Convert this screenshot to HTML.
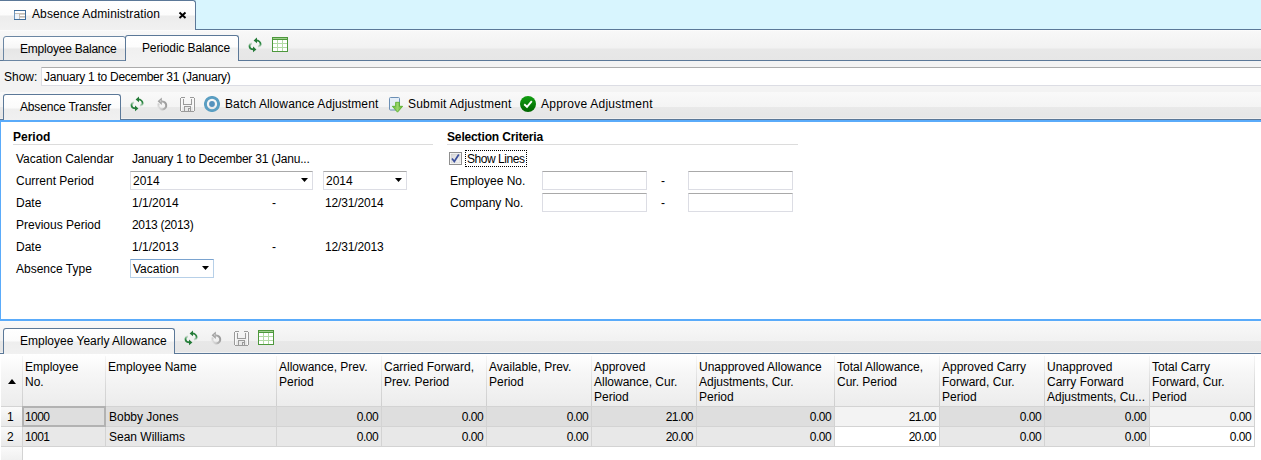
<!DOCTYPE html>
<html><head><meta charset="utf-8">
<style>
*{box-sizing:border-box}
html,body{margin:0;padding:0}
body{width:1261px;height:460px;overflow:hidden;position:relative;background:#f3f3f3;font-family:"Liberation Sans",sans-serif;font-size:12px;color:#000}
.a{position:absolute}
.t{position:absolute;line-height:14px;white-space:nowrap}
.hl{position:absolute;left:0;right:0;height:1px}
</style></head><body>

<!-- top strip -->
<div class="a" style="left:0;top:0;width:1261px;height:29px;background:#d8f5fe"></div>
<div class="a" style="left:-4px;top:0;width:200px;height:31px;border:1px solid #5b7898;border-bottom:none;border-radius:0 3px 0 0;background:linear-gradient(#fff 0,#fcfcfc 14px,#ececec 15px,#f1f1f1 29px)"></div>
<div class="hl" style="top:29px;left:195px;background:#5b7898"></div>
<svg class="a" style="left:14px;top:10px" width="12" height="10" shape-rendering="crispEdges"><rect x="0" y="0" width="12" height="10" fill="#3f6d9b"/><rect x="0" y="1" width="1" height="8" fill="#6f97bd"/><rect x="1" y="1" width="10" height="8" fill="#fff"/><rect x="1" y="3" width="10" height="1" fill="#c4bdb5"/><rect x="1" y="4" width="4" height="5" fill="#edf3fa"/><rect x="5" y="4" width="1" height="5" fill="#c4bdb5"/><rect x="6" y="4" width="5" height="1" fill="#d8d3cc"/><rect x="6" y="6" width="5" height="1" fill="#c4bdb5"/><rect x="6" y="7" width="5" height="1" fill="#d8d3cc"/></svg>
<div class="t" style="left:32px;top:7px;letter-spacing:0.12px">Absence Administration</div>
<svg class="a" style="left:178px;top:11px" width="9" height="8"><path d="M1.5 1.5L7.5 7M7.5 1.5L1.5 7" stroke="#000" stroke-width="1.9"/></svg>

<!-- toolbar 1 -->
<div class="a" style="left:0;top:30px;width:1261px;height:30px;background:linear-gradient(#fff 0,#f8f8f8 1px,#f2f2f2 18px,#e8e8e8 19px,#e6e6e6 30px)"></div>
<div class="hl" style="top:60px;background:#5b7898"></div>
<div class="a" style="left:3px;top:36px;width:123px;height:25px;border:1px solid #6b86a3;border-radius:3px 3px 0 0;background:linear-gradient(#fff 0,#f6f6f6 11px,#e6e6e6 12px,#ebebeb 24px)"></div>
<div class="t" style="left:20px;top:42px;letter-spacing:-0.22px">Employee Balance</div>
<div class="a" style="left:125px;top:35px;width:114px;height:26px;border:1px solid #5b7898;border-bottom:none;border-radius:3px 3px 0 0;background:linear-gradient(#fff 0,#fdfdfd 11px,#f0f0f0 12px,#f3f3f3 26px)"></div>
<div class="t" style="left:142px;top:41px;letter-spacing:-0.13px">Periodic Balance</div>



<!-- show row -->
<div class="t" style="left:4px;top:70px">Show:</div>
<div class="a" style="left:41px;top:67px;width:1230px;height:19px;background:#fff;border:1px solid #dcdde4;border-top-color:#acacac"></div>
<div class="t" style="left:44px;top:70px;letter-spacing:-0.26px">January 1 to December 31 (January)</div>

<!-- toolbar 2 -->
<div class="a" style="left:0;top:92px;width:1261px;height:28px;background:linear-gradient(#f9f9f9 0,#f4f4f4 15px,#e9e9e9 15px,#e6e6e6 26px,#f0f0f0 26px,#f0f0f0 27px,#5b7898 27px)"></div>
<div class="a" style="left:3px;top:94px;width:118px;height:26px;border:1px solid #5b7898;border-bottom:none;border-radius:3px 3px 0 0;background:linear-gradient(#fff 0,#fbfbfb 13px,#eeeeee 14px,#f1f1f1 26px)"></div>
<div class="t" style="left:20px;top:100px;letter-spacing:-0.18px">Absence Transfer</div>



<svg class="a" style="left:204px;top:96px" width="16" height="16"><circle cx="8" cy="8" r="6.6" fill="none" stroke="#5a9ec2" stroke-width="2.9"/><circle cx="8" cy="8" r="2.9" fill="#5692bd"/></svg>
<div class="t" style="left:225px;top:97px;letter-spacing:0.1px">Batch Allowance Adjustment</div>
<svg class="a" style="left:389px;top:97px" width="15" height="16"><rect x="0.5" y="0.5" width="10" height="12.5" rx="1" fill="#e4eef8" stroke="#6b8fb5"/><defs><linearGradient id="sg" x1="0" y1="0" x2="1" y2="0"><stop offset="0" stop-color="#5cb82a"/><stop offset="0.5" stop-color="#9ad46e"/><stop offset="1" stop-color="#5cb82a"/></linearGradient></defs><path d="M6.6 5.3h3.8v4h3.3l-5.2 5.9l-5.2-5.9h3.3z" fill="url(#sg)" stroke="#55ad28" stroke-width="0.8"/></svg>
<div class="t" style="left:408px;top:97px;letter-spacing:0.2px">Submit Adjustment</div>
<svg class="a" style="left:520px;top:96px" width="16" height="16"><defs><linearGradient id="gg" x1="0" y1="0" x2="0" y2="1"><stop offset="0" stop-color="#12a012"/><stop offset="1" stop-color="#006400"/></linearGradient></defs><circle cx="8" cy="8" r="8" fill="url(#gg)"/><path d="M4.2 8.3 L7 10.8 L11.8 5.2" fill="none" stroke="#fff" stroke-width="1.9"/></svg>
<div class="t" style="left:541px;top:97px;letter-spacing:0.24px">Approve Adjustment</div>

<!-- content panel -->
<div class="a" style="left:0;top:120px;width:1261px;height:201px;background:#fff;border-left:1px solid #5aabfa;border-top:2px solid #5aabfa;border-bottom:2px solid #5aabfa"></div>

<div class="t" style="left:13px;top:130px;font-weight:bold">Period</div>
<div class="a" style="left:13px;top:144px;width:420px;height:1px;background:#dcdcdc"></div>
<div class="t" style="left:16px;top:152px">Vacation Calendar</div>
<div class="t" style="left:132px;top:152px;letter-spacing:-0.22px">January 1 to December 31 (Janu...</div>
<div class="t" style="left:16px;top:174px">Current Period</div>
<div class="a" style="left:130px;top:171px;width:183px;height:19px;border:1px solid #dcdde4;border-top-color:#a9a9a9;background:#fff"></div>
<div class="t" style="left:133px;top:174px">2014</div>
<svg class="a" style="left:301px;top:178px" width="7" height="4"><path d="M0 0h7L3.5 4z" fill="#000"/></svg>
<div class="a" style="left:323px;top:171px;width:84px;height:19px;border:1px solid #dcdde4;border-top-color:#a9a9a9;background:#fff"></div>
<div class="t" style="left:326px;top:174px">2014</div>
<svg class="a" style="left:395px;top:178px" width="7" height="4"><path d="M0 0h7L3.5 4z" fill="#000"/></svg>
<div class="t" style="left:16px;top:196px">Date</div>
<div class="t" style="left:132px;top:196px">1/1/2014</div>
<div class="t" style="left:272px;top:196px">-</div>
<div class="t" style="left:325px;top:196px;letter-spacing:-0.15px">12/31/2014</div>
<div class="t" style="left:16px;top:218px">Previous Period</div>
<div class="t" style="left:132px;top:218px;letter-spacing:-0.3px">2013 (2013)</div>
<div class="t" style="left:16px;top:240px">Date</div>
<div class="t" style="left:132px;top:240px">1/1/2013</div>
<div class="t" style="left:272px;top:240px">-</div>
<div class="t" style="left:325px;top:240px;letter-spacing:-0.15px">12/31/2013</div>
<div class="t" style="left:16px;top:262px">Absence Type</div>
<div class="a" style="left:130px;top:259px;width:84px;height:19px;border:1px solid #b7d0e8;border-top-color:#7aa3cf;background:#fff"></div>
<div class="t" style="left:133px;top:262px">Vacation</div>
<svg class="a" style="left:202px;top:266px" width="7" height="4"><path d="M0 0h7L3.5 4z" fill="#000"/></svg>

<div class="t" style="left:447px;top:130px;font-weight:bold;letter-spacing:-0.15px">Selection Criteria</div>
<div class="a" style="left:447px;top:144px;width:351px;height:1px;background:#dcdcdc"></div>
<svg class="a" style="left:449px;top:152px" width="13" height="13"><defs><linearGradient id="cb" x1="0" y1="0" x2="1" y2="1"><stop offset="0" stop-color="#d6d6d6"/><stop offset="1" stop-color="#f6f6f6"/></linearGradient></defs><rect x="0.5" y="0.5" width="12" height="12" fill="#fff" stroke="#8f8f8f"/><rect x="2" y="2" width="9" height="9" fill="url(#cb)" stroke="#c4c4c4" stroke-width="0.5"/><path d="M3 6.5 L5.3 9.5 L9.8 2.5" fill="none" stroke="#3b4f9c" stroke-width="1.7"/></svg>
<div class="a" style="left:465px;top:150px;width:62px;height:17px;border:1px dotted #000"></div>
<div class="t" style="left:467px;top:152px;letter-spacing:-0.45px">Show Lines</div>
<div class="t" style="left:450px;top:174px">Employee No.</div>
<div class="a" style="left:542px;top:171px;width:105px;height:19px;border:1px solid #dcdde4;border-top-color:#a9a9a9;background:#fff"></div>
<div class="t" style="left:661px;top:174px">-</div>
<div class="a" style="left:688px;top:171px;width:105px;height:19px;border:1px solid #dcdde4;border-top-color:#a9a9a9;background:#fff"></div>
<div class="t" style="left:450px;top:196px">Company No.</div>
<div class="a" style="left:542px;top:193px;width:105px;height:19px;border:1px solid #dcdde4;border-top-color:#a9a9a9;background:#fff"></div>
<div class="t" style="left:661px;top:196px">-</div>
<div class="a" style="left:688px;top:193px;width:105px;height:19px;border:1px solid #dcdde4;border-top-color:#a9a9a9;background:#fff"></div>

<!-- toolbar 3 -->
<div class="a" style="left:0;top:321px;width:1261px;height:33px;background:linear-gradient(#fafafa 0,#f8f8f8 2px,#f1f1f1 20px,#e8e8e8 20px,#e6e6e6 31px,#f2f2f2 31px,#f2f2f2 32px,#5b7898 32px)"></div>
<div class="a" style="left:3px;top:328px;width:172px;height:26px;border:1px solid #5b7898;border-bottom:none;border-radius:3px 3px 0 0;background:linear-gradient(#fff 0,#fbfbfb 12px,#eeeeee 13px,#f1f1f1 26px)"></div>
<div class="t" style="left:20px;top:334px">Employee Yearly Allowance</div>





<!-- grid -->
<div class="a" style="left:0;top:354px;width:1261px;height:106px;background:#fff"></div>
<div id="grid">
<div class="a" style="left:1px;top:354px;width:1253px;height:52px;background:linear-gradient(#fff 0,#fcfcfc 8px,#f6f6f6 20px,#ececec 52px)"></div>
<div class="a" style="left:1px;top:407px;width:21px;height:19px;background:linear-gradient(#fafafa,#e9e9e9)"></div>
<div class="a" style="left:1px;top:427px;width:21px;height:19px;background:linear-gradient(#fafafa,#e9e9e9)"></div>
<div class="a" style="left:1px;top:447px;width:21px;height:13px;background:linear-gradient(#fafafa,#f0f0f0)"></div>
<div class="a" style="left:23px;top:407px;width:82px;height:19px;background:#dedede"></div>
<div class="a" style="left:106px;top:407px;width:170px;height:19px;background:#dedede"></div>
<div class="a" style="left:277px;top:407px;width:104px;height:19px;background:#dedede"></div>
<div class="a" style="left:382px;top:407px;width:104px;height:19px;background:#dedede"></div>
<div class="a" style="left:487px;top:407px;width:104px;height:19px;background:#dedede"></div>
<div class="a" style="left:592px;top:407px;width:104px;height:19px;background:#dedede"></div>
<div class="a" style="left:697px;top:407px;width:137px;height:19px;background:#dedede"></div>
<div class="a" style="left:835px;top:407px;width:104px;height:19px;background:#f3f3f3"></div>
<div class="a" style="left:940px;top:407px;width:104px;height:19px;background:#dedede"></div>
<div class="a" style="left:1045px;top:407px;width:104px;height:19px;background:#dedede"></div>
<div class="a" style="left:1150px;top:407px;width:104px;height:19px;background:#f3f3f3"></div>
<div class="a" style="left:23px;top:427px;width:82px;height:19px;background:#e8e8e8"></div>
<div class="a" style="left:106px;top:427px;width:170px;height:19px;background:#e8e8e8"></div>
<div class="a" style="left:277px;top:427px;width:104px;height:19px;background:#e8e8e8"></div>
<div class="a" style="left:382px;top:427px;width:104px;height:19px;background:#e8e8e8"></div>
<div class="a" style="left:487px;top:427px;width:104px;height:19px;background:#e8e8e8"></div>
<div class="a" style="left:592px;top:427px;width:104px;height:19px;background:#e8e8e8"></div>
<div class="a" style="left:697px;top:427px;width:137px;height:19px;background:#e8e8e8"></div>
<div class="a" style="left:835px;top:427px;width:104px;height:19px;background:#fff"></div>
<div class="a" style="left:940px;top:427px;width:104px;height:19px;background:#e8e8e8"></div>
<div class="a" style="left:1045px;top:427px;width:104px;height:19px;background:#e8e8e8"></div>
<div class="a" style="left:1150px;top:427px;width:104px;height:19px;background:#fff"></div>
<div class="a" style="left:1px;top:406px;width:1254px;height:1px;background:#d3d3d3"></div>
<div class="a" style="left:1px;top:426px;width:1254px;height:1px;background:#d3d3d3"></div>
<div class="a" style="left:1px;top:446px;width:1254px;height:1px;background:#d3d3d3"></div>
<div class="a" style="left:22px;top:356px;width:1px;height:50px;background:linear-gradient(#f6f6f6,#d8d8d8 60%,#cfcfcf)"></div>
<div class="a" style="left:22px;top:406px;width:1px;height:54px;background:#d3d3d3"></div>
<div class="a" style="left:105px;top:356px;width:1px;height:50px;background:linear-gradient(#f6f6f6,#d8d8d8 60%,#cfcfcf)"></div>
<div class="a" style="left:105px;top:406px;width:1px;height:41px;background:#d3d3d3"></div>
<div class="a" style="left:276px;top:356px;width:1px;height:50px;background:linear-gradient(#f6f6f6,#d8d8d8 60%,#cfcfcf)"></div>
<div class="a" style="left:276px;top:406px;width:1px;height:41px;background:#d3d3d3"></div>
<div class="a" style="left:381px;top:356px;width:1px;height:50px;background:linear-gradient(#f6f6f6,#d8d8d8 60%,#cfcfcf)"></div>
<div class="a" style="left:381px;top:406px;width:1px;height:41px;background:#d3d3d3"></div>
<div class="a" style="left:486px;top:356px;width:1px;height:50px;background:linear-gradient(#f6f6f6,#d8d8d8 60%,#cfcfcf)"></div>
<div class="a" style="left:486px;top:406px;width:1px;height:41px;background:#d3d3d3"></div>
<div class="a" style="left:591px;top:356px;width:1px;height:50px;background:linear-gradient(#f6f6f6,#d8d8d8 60%,#cfcfcf)"></div>
<div class="a" style="left:591px;top:406px;width:1px;height:41px;background:#d3d3d3"></div>
<div class="a" style="left:696px;top:356px;width:1px;height:50px;background:linear-gradient(#f6f6f6,#d8d8d8 60%,#cfcfcf)"></div>
<div class="a" style="left:696px;top:406px;width:1px;height:41px;background:#d3d3d3"></div>
<div class="a" style="left:834px;top:356px;width:1px;height:50px;background:linear-gradient(#f6f6f6,#d8d8d8 60%,#cfcfcf)"></div>
<div class="a" style="left:834px;top:406px;width:1px;height:41px;background:#d3d3d3"></div>
<div class="a" style="left:939px;top:356px;width:1px;height:50px;background:linear-gradient(#f6f6f6,#d8d8d8 60%,#cfcfcf)"></div>
<div class="a" style="left:939px;top:406px;width:1px;height:41px;background:#d3d3d3"></div>
<div class="a" style="left:1044px;top:356px;width:1px;height:50px;background:linear-gradient(#f6f6f6,#d8d8d8 60%,#cfcfcf)"></div>
<div class="a" style="left:1044px;top:406px;width:1px;height:41px;background:#d3d3d3"></div>
<div class="a" style="left:1149px;top:356px;width:1px;height:50px;background:linear-gradient(#f6f6f6,#d8d8d8 60%,#cfcfcf)"></div>
<div class="a" style="left:1149px;top:406px;width:1px;height:41px;background:#d3d3d3"></div>
<div class="a" style="left:1254px;top:356px;width:1px;height:50px;background:linear-gradient(#f6f6f6,#d8d8d8 60%,#cfcfcf)"></div>
<div class="a" style="left:1254px;top:406px;width:1px;height:41px;background:#d3d3d3"></div>
<div class="a" style="left:22px;top:406px;width:84px;height:21px;border:2px solid #b2b2b2"></div>
<div class="t" style="left:25px;top:360px">Employee</div>
<div class="t" style="left:25px;top:375px">No.</div>
<div class="t" style="left:108px;top:360px">Employee Name</div>
<div class="t" style="left:279px;top:360px">Allowance, Prev.</div>
<div class="t" style="left:279px;top:375px">Period</div>
<div class="t" style="left:384px;top:360px">Carried Forward,</div>
<div class="t" style="left:384px;top:375px">Prev. Period</div>
<div class="t" style="left:489px;top:360px">Available, Prev.</div>
<div class="t" style="left:489px;top:375px">Period</div>
<div class="t" style="left:594px;top:360px">Approved</div>
<div class="t" style="left:594px;top:375px">Allowance, Cur.</div>
<div class="t" style="left:594px;top:390px">Period</div>
<div class="t" style="left:699px;top:360px">Unapproved Allowance</div>
<div class="t" style="left:699px;top:375px">Adjustments, Cur.</div>
<div class="t" style="left:699px;top:390px">Period</div>
<div class="t" style="left:837px;top:360px">Total Allowance,</div>
<div class="t" style="left:837px;top:375px">Cur. Period</div>
<div class="t" style="left:942px;top:360px">Approved Carry</div>
<div class="t" style="left:942px;top:375px">Forward, Cur.</div>
<div class="t" style="left:942px;top:390px">Period</div>
<div class="t" style="left:1047px;top:360px">Unapproved</div>
<div class="t" style="left:1047px;top:375px">Carry Forward</div>
<div class="t" style="left:1047px;top:390px">Adjustments, Cu...</div>
<div class="t" style="left:1152px;top:360px">Total Carry</div>
<div class="t" style="left:1152px;top:375px">Forward, Cur.</div>
<div class="t" style="left:1152px;top:390px">Period</div>
<svg class="a" style="left:8px;top:379px" width="8" height="5"><path d="M0 5h8L4 0z" fill="#000"/></svg>
<div class="t" style="left:7px;top:410px">1</div>
<div class="t" style="left:25px;top:410px;letter-spacing:-0.6px">1000</div>
<div class="t" style="left:109px;top:410px">Bobby Jones</div>
<div class="t" style="left:276px;width:102px;text-align:right;top:410px;letter-spacing:-0.55px">0.00</div>
<div class="t" style="left:381px;width:102px;text-align:right;top:410px;letter-spacing:-0.55px">0.00</div>
<div class="t" style="left:486px;width:102px;text-align:right;top:410px;letter-spacing:-0.55px">0.00</div>
<div class="t" style="left:591px;width:102px;text-align:right;top:410px;letter-spacing:-0.55px">21.00</div>
<div class="t" style="left:696px;width:135px;text-align:right;top:410px;letter-spacing:-0.55px">0.00</div>
<div class="t" style="left:834px;width:102px;text-align:right;top:410px;letter-spacing:-0.55px">21.00</div>
<div class="t" style="left:939px;width:102px;text-align:right;top:410px;letter-spacing:-0.55px">0.00</div>
<div class="t" style="left:1044px;width:102px;text-align:right;top:410px;letter-spacing:-0.55px">0.00</div>
<div class="t" style="left:1149px;width:102px;text-align:right;top:410px;letter-spacing:-0.55px">0.00</div>
<div class="t" style="left:7px;top:430px">2</div>
<div class="t" style="left:25px;top:430px;letter-spacing:-0.6px">1001</div>
<div class="t" style="left:109px;top:430px">Sean Williams</div>
<div class="t" style="left:276px;width:102px;text-align:right;top:430px;letter-spacing:-0.55px">0.00</div>
<div class="t" style="left:381px;width:102px;text-align:right;top:430px;letter-spacing:-0.55px">0.00</div>
<div class="t" style="left:486px;width:102px;text-align:right;top:430px;letter-spacing:-0.55px">0.00</div>
<div class="t" style="left:591px;width:102px;text-align:right;top:430px;letter-spacing:-0.55px">20.00</div>
<div class="t" style="left:696px;width:135px;text-align:right;top:430px;letter-spacing:-0.55px">0.00</div>
<div class="t" style="left:834px;width:102px;text-align:right;top:430px;letter-spacing:-0.55px">20.00</div>
<div class="t" style="left:939px;width:102px;text-align:right;top:430px;letter-spacing:-0.55px">0.00</div>
<div class="t" style="left:1044px;width:102px;text-align:right;top:430px;letter-spacing:-0.55px">0.00</div>
<div class="t" style="left:1149px;width:102px;text-align:right;top:430px;letter-spacing:-0.55px">0.00</div>
</div><!--/grid-->




<!--ICONS--><svg class="a" style="left:246px;top:36px" width="18" height="18" viewBox="0 0 18 18"><defs><linearGradient id="rf1a" gradientUnits="userSpaceOnUse" x1="0" y1="4" x2="0" y2="11"><stop offset="0" stop-color="#237a37"/><stop offset="0.55" stop-color="#2f8a45"/><stop offset="1" stop-color="#2f8a45" stop-opacity="0.15"/></linearGradient><linearGradient id="rf1b" gradientUnits="userSpaceOnUse" x1="0" y1="7" x2="0" y2="14"><stop offset="0" stop-color="#2f8a45" stop-opacity="0.15"/><stop offset="0.45" stop-color="#2f8a45"/><stop offset="1" stop-color="#237a37"/></linearGradient></defs><path d="M10 4.4 C12.8 4.4 14.6 6.2 14.6 8.3 C14.6 9.8 13.6 10.6 12 10.9" fill="none" stroke="url(#rf1a)" stroke-width="1.8"/><path d="M6 7.1 C4.4 7.5 3.5 8.6 3.5 10 C3.5 12 5 13.4 8 13.4" fill="none" stroke="url(#rf1b)" stroke-width="1.8"/><path d="M7.6 4.4 L11 1.6 L11 7.2Z" fill="#237a37"/><path d="M10.4 13.4 L7 10.6 L7 16.2Z" fill="#237a37"/></svg><svg class="a" style="left:272px;top:37px" width="16" height="15" shape-rendering="crispEdges"><rect x="0" y="0" width="16" height="15" fill="#4d983c"/><rect x="1" y="1" width="14" height="1" fill="#9fd08e"/><rect x="1" y="3" width="14" height="11" fill="#b3dba6"/><rect x="1" y="3" width="4" height="3" fill="#fff"/><rect x="6" y="3" width="4" height="3" fill="#fff"/><rect x="11" y="3" width="4" height="3" fill="#fff"/><rect x="1" y="7" width="4" height="3" fill="#fff"/><rect x="6" y="7" width="4" height="3" fill="#fff"/><rect x="11" y="7" width="4" height="3" fill="#fff"/><rect x="1" y="11" width="4" height="3" fill="#fff"/><rect x="6" y="11" width="4" height="3" fill="#fff"/><rect x="11" y="11" width="4" height="3" fill="#fff"/></svg><svg class="a" style="left:128px;top:95px" width="18" height="18" viewBox="0 0 18 18"><defs><linearGradient id="rf2a" gradientUnits="userSpaceOnUse" x1="0" y1="4" x2="0" y2="11"><stop offset="0" stop-color="#237a37"/><stop offset="0.55" stop-color="#2f8a45"/><stop offset="1" stop-color="#2f8a45" stop-opacity="0.15"/></linearGradient><linearGradient id="rf2b" gradientUnits="userSpaceOnUse" x1="0" y1="7" x2="0" y2="14"><stop offset="0" stop-color="#2f8a45" stop-opacity="0.15"/><stop offset="0.45" stop-color="#2f8a45"/><stop offset="1" stop-color="#237a37"/></linearGradient></defs><path d="M10 4.4 C12.8 4.4 14.6 6.2 14.6 8.3 C14.6 9.8 13.6 10.6 12 10.9" fill="none" stroke="url(#rf2a)" stroke-width="1.8"/><path d="M6 7.1 C4.4 7.5 3.5 8.6 3.5 10 C3.5 12 5 13.4 8 13.4" fill="none" stroke="url(#rf2b)" stroke-width="1.8"/><path d="M7.6 4.4 L11 1.6 L11 7.2Z" fill="#237a37"/><path d="M10.4 13.4 L7 10.6 L7 16.2Z" fill="#237a37"/></svg><svg class="a" style="left:154px;top:95px" width="18" height="18" viewBox="0 0 18 18"><defs><linearGradient id="ud2" gradientUnits="userSpaceOnUse" x1="12.5" y1="8" x2="4" y2="12"><stop offset="0" stop-color="#9a9a9a"/><stop offset="0.55" stop-color="#b4b4b4"/><stop offset="1" stop-color="#e2e2e2"/></linearGradient></defs><path d="M8 6.5 A4 4 0 1 1 4.74 8.5" fill="none" stroke="url(#ud2)" stroke-width="2.1"/><path d="M3.6 6.3 L7.8 2.6 L7.8 10Z" fill="#a2a2a2"/><path d="M5.6 5.8 L6.8 5 L6.8 7.6Z" fill="#d8d8d8"/></svg><svg class="a" style="left:178px;top:95px" width="20" height="20" shape-rendering="crispEdges"><rect x="2" y="3" width="1" height="13" fill="#9a9a9a"/><rect x="16" y="3" width="1" height="13" fill="#9a9a9a"/><rect x="3" y="16" width="13" height="1" fill="#9a9a9a"/><rect x="3" y="2" width="4" height="1" fill="#9a9a9a"/><rect x="12" y="2" width="4" height="1" fill="#9a9a9a"/><rect x="3" y="3" width="1" height="13" fill="#fafafa"/><rect x="15" y="3" width="1" height="13" fill="#fafafa"/><rect x="5" y="4" width="1" height="5" fill="#9a9a9a"/><rect x="13" y="4" width="1" height="5" fill="#9a9a9a"/><rect x="5" y="9" width="9" height="1" fill="#9a9a9a"/><rect x="6" y="11" width="1" height="5" fill="#9a9a9a"/><rect x="12" y="11" width="1" height="5" fill="#9a9a9a"/><rect x="7" y="11" width="5" height="1" fill="#9a9a9a"/><rect x="10" y="13" width="2" height="1" fill="#9a9a9a"/><rect x="10" y="14" width="1" height="2" fill="#9a9a9a"/></svg><svg class="a" style="left:182px;top:329px" width="18" height="18" viewBox="0 0 18 18"><defs><linearGradient id="rf3a" gradientUnits="userSpaceOnUse" x1="0" y1="4" x2="0" y2="11"><stop offset="0" stop-color="#237a37"/><stop offset="0.55" stop-color="#2f8a45"/><stop offset="1" stop-color="#2f8a45" stop-opacity="0.15"/></linearGradient><linearGradient id="rf3b" gradientUnits="userSpaceOnUse" x1="0" y1="7" x2="0" y2="14"><stop offset="0" stop-color="#2f8a45" stop-opacity="0.15"/><stop offset="0.45" stop-color="#2f8a45"/><stop offset="1" stop-color="#237a37"/></linearGradient></defs><path d="M10 4.4 C12.8 4.4 14.6 6.2 14.6 8.3 C14.6 9.8 13.6 10.6 12 10.9" fill="none" stroke="url(#rf3a)" stroke-width="1.8"/><path d="M6 7.1 C4.4 7.5 3.5 8.6 3.5 10 C3.5 12 5 13.4 8 13.4" fill="none" stroke="url(#rf3b)" stroke-width="1.8"/><path d="M7.6 4.4 L11 1.6 L11 7.2Z" fill="#237a37"/><path d="M10.4 13.4 L7 10.6 L7 16.2Z" fill="#237a37"/></svg><svg class="a" style="left:208px;top:329px" width="18" height="18" viewBox="0 0 18 18"><defs><linearGradient id="ud3" gradientUnits="userSpaceOnUse" x1="12.5" y1="8" x2="4" y2="12"><stop offset="0" stop-color="#9a9a9a"/><stop offset="0.55" stop-color="#b4b4b4"/><stop offset="1" stop-color="#e2e2e2"/></linearGradient></defs><path d="M8 6.5 A4 4 0 1 1 4.74 8.5" fill="none" stroke="url(#ud3)" stroke-width="2.1"/><path d="M3.6 6.3 L7.8 2.6 L7.8 10Z" fill="#a2a2a2"/><path d="M5.6 5.8 L6.8 5 L6.8 7.6Z" fill="#d8d8d8"/></svg><svg class="a" style="left:232px;top:329px" width="20" height="20" shape-rendering="crispEdges"><rect x="2" y="3" width="1" height="13" fill="#9a9a9a"/><rect x="16" y="3" width="1" height="13" fill="#9a9a9a"/><rect x="3" y="16" width="13" height="1" fill="#9a9a9a"/><rect x="3" y="2" width="4" height="1" fill="#9a9a9a"/><rect x="12" y="2" width="4" height="1" fill="#9a9a9a"/><rect x="3" y="3" width="1" height="13" fill="#fafafa"/><rect x="15" y="3" width="1" height="13" fill="#fafafa"/><rect x="5" y="4" width="1" height="5" fill="#9a9a9a"/><rect x="13" y="4" width="1" height="5" fill="#9a9a9a"/><rect x="5" y="9" width="9" height="1" fill="#9a9a9a"/><rect x="6" y="11" width="1" height="5" fill="#9a9a9a"/><rect x="12" y="11" width="1" height="5" fill="#9a9a9a"/><rect x="7" y="11" width="5" height="1" fill="#9a9a9a"/><rect x="10" y="13" width="2" height="1" fill="#9a9a9a"/><rect x="10" y="14" width="1" height="2" fill="#9a9a9a"/></svg><svg class="a" style="left:258px;top:330px" width="16" height="15" shape-rendering="crispEdges"><rect x="0" y="0" width="16" height="15" fill="#4d983c"/><rect x="1" y="1" width="14" height="1" fill="#9fd08e"/><rect x="1" y="3" width="14" height="11" fill="#b3dba6"/><rect x="1" y="3" width="4" height="3" fill="#fff"/><rect x="6" y="3" width="4" height="3" fill="#fff"/><rect x="11" y="3" width="4" height="3" fill="#fff"/><rect x="1" y="7" width="4" height="3" fill="#fff"/><rect x="6" y="7" width="4" height="3" fill="#fff"/><rect x="11" y="7" width="4" height="3" fill="#fff"/><rect x="1" y="11" width="4" height="3" fill="#fff"/><rect x="6" y="11" width="4" height="3" fill="#fff"/><rect x="11" y="11" width="4" height="3" fill="#fff"/></svg><!--/ICONS-->
</body></html>
